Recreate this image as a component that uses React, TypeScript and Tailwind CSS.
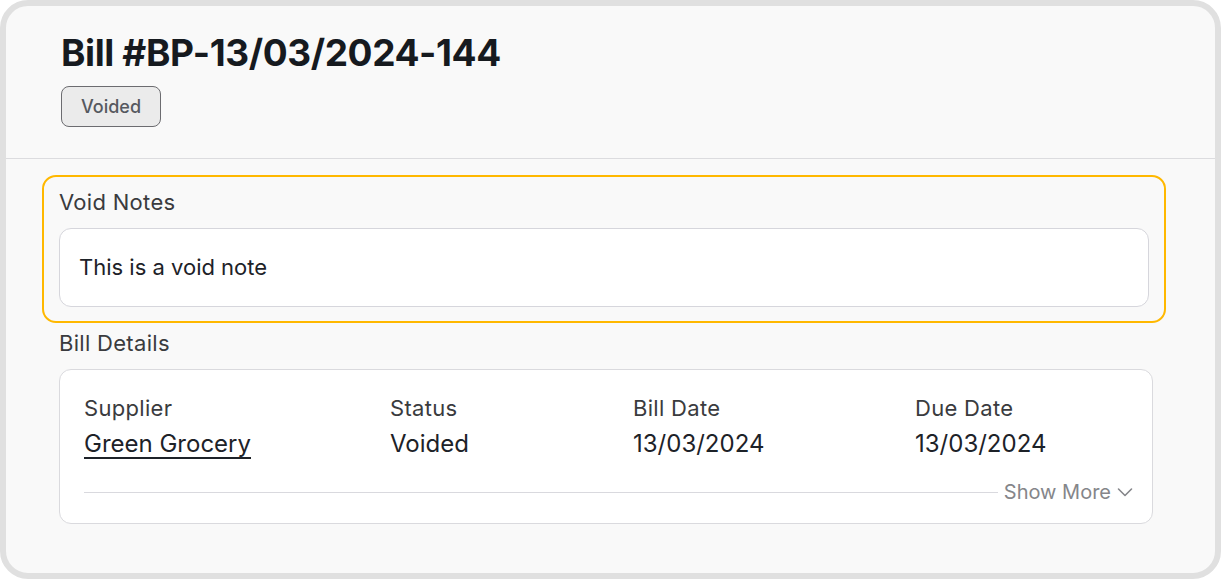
import React from "react";

const font = { fontFamily: "Inter, 'Noto Sans', sans-serif" };

export default function App() {
  return (
    <div className="w-[1221px] h-[579px] bg-white" style={font}>
      <div className="h-full w-full rounded-[28px] border-[6px] border-[#e0e0e0] bg-[#f9f9f9] flex flex-col">
        <div className="px-[55px] pt-[25px] pb-[31px] border-b border-[#dcdcdf]">
          <h1 className="text-[37px] leading-[44px] font-bold text-[#161a1f] tracking-[-0.4px]">
            Bill #BP-13/03/2024-144
          </h1>
          <div className="mt-[11px] inline-flex items-center justify-center w-[100px] h-[41px] rounded-[8px] border-[1.5px] border-[#6c6c70] bg-[#ebebeb] text-[18px] font-medium text-[#56595f]">
            Voided
          </div>
        </div>
        <div className="pl-[36px] pr-[49px] pt-[16px]">
          <div className="rounded-[14px] border-2 border-[#ffb800] px-[15px] pt-[11px] pb-[14px]">
            <div className="text-[22px] leading-[28px] tracking-[0.3px] text-[#3a3b3e]">Void Notes</div>
            <div className="mt-[12px] h-[79px] rounded-[12px] border border-[#d6d6dc] bg-white flex items-center px-[19px] text-[22px] text-[#1d2228]">
              This is a void note
            </div>
          </div>
          <div className="pl-[17px] pr-[13px]">
            <div className="mt-[6px] text-[22px] leading-[28px] tracking-[0.3px] text-[#3a3b3e]">Bill Details</div>
            <div className="mt-[12px] h-[155px] rounded-[12px] border border-[#dadade] bg-white pl-[24px] pr-[19px] pt-[24px]">
              <div className="grid grid-cols-[306px_243px_282px_1fr]">
                {[
                  ["Supplier", "Green Grocery", true],
                  ["Status", "Voided", false],
                  ["Bill Date", "13/03/2024", false],
                  ["Due Date", "13/03/2024", false],
                ].map(([label, value, link]) => (
                  <div key={label as string} className="flex flex-col">
                    <span className="text-[22px] leading-[28px] tracking-[0.3px] text-[#3a3b3e]">{label}</span>
                    <span
                      className={
                        "mt-[7px] text-[24px] leading-[30px] text-[#1d2228]" +
                        (link ? " underline decoration-[1.5px] underline-offset-[5px] self-start" : "")
                      }
                    >
                      {value}
                    </span>
                  </div>
                ))}
              </div>
              <div className="mt-[19px] h-[28px] flex items-center gap-[6px]">
                <div className="flex-1 h-px bg-[#d9d9de]" />
                <span className="text-[20px] text-[#85868a]">Show More</span>
                <svg width="16" height="16" viewBox="0 0 16 16" fill="none" className="text-[#85868a]">
                  <path d="M1.5 5l6.5 6.5 6.5-6.5" stroke="currentColor" strokeWidth="1.6" strokeLinecap="round" strokeLinejoin="round" />
                </svg>
              </div>
            </div>
          </div>
        </div>
      </div>
    </div>
  );
}
